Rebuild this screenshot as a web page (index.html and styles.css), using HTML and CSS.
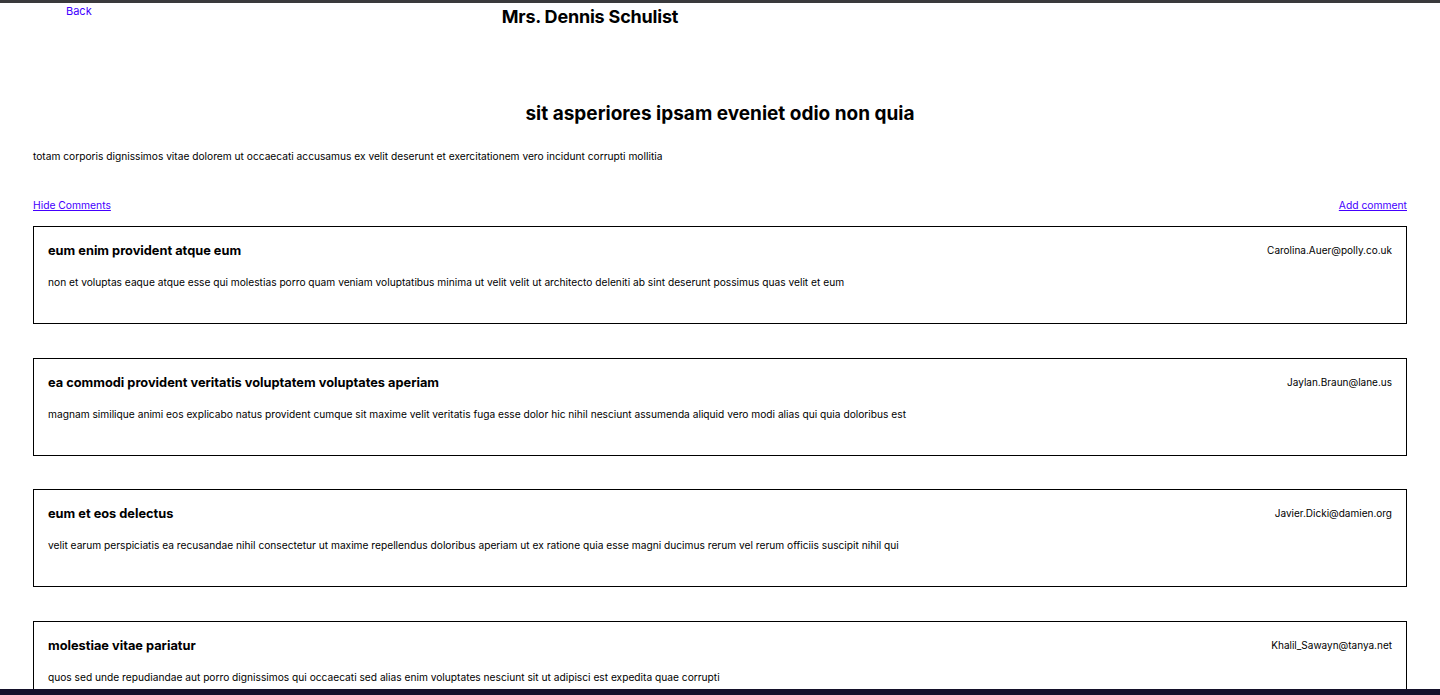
FILE: index.html
```html
<!DOCTYPE html>
<html lang="en">
<head>
<meta charset="utf-8">
<title>Post</title>
<link rel="stylesheet" href="styles.css">
</head>
<body>
<div class="topbar"></div>
<header class="header">
  <a class="back" href="#">Back</a>
  <h1 class="author">Mrs. Dennis Schulist</h1>
</header>
<main class="main">
  <h2 class="post-title">sit asperiores ipsam eveniet odio non quia</h2>
  <p class="post-body">totam corporis dignissimos vitae dolorem ut occaecati accusamus ex velit deserunt et exercitationem vero incidunt corrupti mollitia</p>
  <div class="actions">
    <a href="#" class="link">Hide Comments</a>
    <a href="#" class="link">Add comment</a>
  </div>
  <section class="comments">
    <article class="card">
      <div class="card-head">
        <h3 class="card-title">eum enim provident atque eum</h3>
        <span class="email">Carolina.Auer@polly.co.uk</span>
      </div>
      <p class="card-body">non et voluptas eaque atque esse qui molestias porro quam veniam voluptatibus minima ut velit velit ut architecto deleniti ab sint deserunt possimus quas velit et eum</p>
    </article>
    <article class="card">
      <div class="card-head">
        <h3 class="card-title">ea commodi provident veritatis voluptatem voluptates aperiam</h3>
        <span class="email">Jaylan.Braun@lane.us</span>
      </div>
      <p class="card-body">magnam similique animi eos explicabo natus provident cumque sit maxime velit veritatis fuga esse dolor hic nihil nesciunt assumenda aliquid vero modi alias qui quia doloribus est</p>
    </article>
    <article class="card">
      <div class="card-head">
        <h3 class="card-title">eum et eos delectus</h3>
        <span class="email">Javier.Dicki@damien.org</span>
      </div>
      <p class="card-body">velit earum perspiciatis ea recusandae nihil consectetur ut maxime repellendus doloribus aperiam ut ex ratione quia esse magni ducimus rerum vel rerum officiis suscipit nihil qui</p>
    </article>
    <article class="card">
      <div class="card-head">
        <h3 class="card-title">molestiae vitae pariatur</h3>
        <span class="email">Khalil_Sawayn@tanya.net</span>
      </div>
      <p class="card-body">quos sed unde repudiandae aut porro dignissimos qui occaecati sed alias enim voluptates nesciunt sit ut adipisci est expedita quae corrupti</p>
    </article>
  </section>
</main>
<div class="dock-edge"></div>
</body>
</html>
```

FILE: styles.css
```css
* { box-sizing: border-box; }
html, body { margin: 0; padding: 0; background: #fff; }
body {
  font-family: Inter, "Noto Sans", "Liberation Sans", sans-serif;
  color: #000;
}
.topbar { height: 3px; background: #3a3a3c; }
.header {
  display: flex;
  align-items: flex-start;
  padding-left: 66px;
  gap: 410px;
}
.back {
  font-size: 11px;
  line-height: 14px;
  margin-top: 1px;
  color: #4400ff;
  text-decoration: none;
}
.author {
  margin: 3px 0 0;
  font-size: 18px;
  line-height: 22px;
  font-weight: 700;
  letter-spacing: -0.2px;
}
.main { padding: 0 33px; }
.post-title {
  margin: 74px 0 0;
  text-align: center;
  font-size: 19px;
  line-height: 24px;
  font-weight: 700;
}
.post-body {
  margin: 23px 0 0;
  font-size: 10.2px;
  line-height: 14px;
}
.actions {
  display: flex;
  justify-content: space-between;
  margin-top: 35px;
}
.link {
  font-size: 10.3px;
  line-height: 14px;
  color: #4400ff;
  text-decoration: underline;
}
.comments { margin-top: 14px; }
.card {
  border: 1px solid #000;
  height: 98px;
  padding: 16px 14px 0 14px;
  margin-bottom: 33.5px;
}
.card-head {
  display: flex;
  justify-content: space-between;
  align-items: flex-start;
}
.card-title {
  margin: 0;
  font-size: 12.8px;
  line-height: 16px;
  font-weight: 700;
}
.email {
  font-size: 10px;
  line-height: 14px;
}
.card-body {
  margin: 16px 0 0;
  font-size: 10.2px;
  line-height: 14px;
}
.dock-edge {
  position: fixed;
  left: 0;
  right: 0;
  bottom: 0;
  height: 6px;
  background: #14112a;
}
```
